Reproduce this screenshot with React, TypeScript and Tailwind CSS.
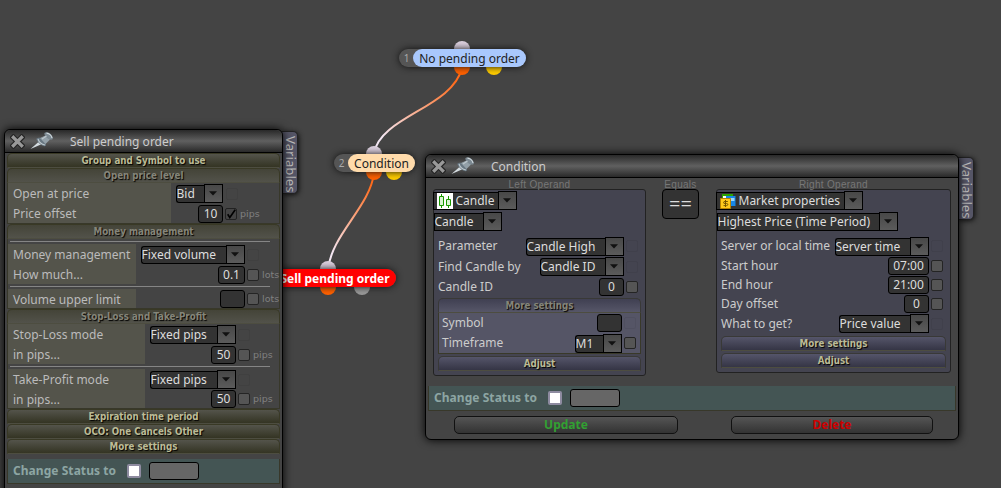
import type { ReactNode } from "react";

const TEXT = "font-['Noto_Sans',sans-serif] text-[12px] leading-[16px] whitespace-nowrap";

function Label({ children, className = "" }: { children: ReactNode; className?: string }) {
  return <span className={`${TEXT} ${className}`}>{children}</span>;
}

function Arrow() {
  return (
    <span className="flex h-[19px] w-[19px] shrink-0 items-center justify-center border border-black bg-linear-to-b from-[#484848] to-[#5b5b5b] pr-px">
      <svg width="8" height="5" viewBox="0 0 8 5"><path d="M0 0.3H8L4 4.5Z" fill="#111" /></svg>
    </span>
  );
}

function Select({ children, width, icon, square = false }: { children: ReactNode; width: string; icon?: ReactNode; square?: boolean }) {
  return (
    <span className={`flex h-[19px] shrink-0 items-end ${width}`}>
      <span className={`flex h-[18px] min-w-0 flex-1 items-center border border-r-0 border-black bg-[#333] text-[#ddd] ${square ? "" : "rounded-l-[3px]"}`}>
        {icon}
        <Label className="-ml-[0.5px]">{children}</Label>
      </span>
      <Arrow />
    </span>
  );
}

function Field({ children, width }: { children?: ReactNode; width: string }) {
  return (
    <span className={`flex h-[18px] shrink-0 items-center justify-center rounded-[3px] border border-black bg-[#333] text-[#ddd] ${width}`}>
      <Label>{children}</Label>
    </span>
  );
}

function Check({ state = "on", margin = "ml-[2px]" }: { state?: "on" | "off" | "checked"; margin?: string }) {
  const look = state === "off" ? "border-black/6" : state === "checked" ? "border-[#222] bg-[#444]" : "border-[#242424] bg-[#555]";
  return (
    <span className={`flex h-3 w-3 shrink-0 items-center justify-center rounded-[2px] border ${look} ${margin}`}>
      {state === "checked" && (
        <svg width="9" height="10" viewBox="0 0 9 10"><path d="M0.7 5.2L2.8 8.5L8.2 0.7" fill="none" stroke="#000" strokeWidth="1.6" /></svg>
      )}
    </span>
  );
}

function Unit({ children }: { children?: ReactNode }) {
  return <span className="mb-px ml-[3px] font-['DejaVu_Sans',sans-serif] text-[9.5px] leading-[16px] text-[#808080]">{children}</span>;
}

function Bar({ children, tone, active = true }: { children: ReactNode; tone: "olive" | "violet"; active?: boolean }) {
  const bg = tone === "olive"
    ? active ? "from-[#54544b] to-[#343423] border-[#393925]" : "from-[#444438] to-[#52524a] border-[#393925]"
    : active ? "from-[#55556a] to-[#353545] border-[#393937]" : "from-[#404052] to-[#565668] border-[#393937]";
  return (
    <div className={`flex h-[15px] shrink-0 items-center justify-center rounded-t-[5px] border border-b-[#4d4d40] bg-linear-to-b ${bg}`}>
      <span className={`font-['DejaVu_Sans_Condensed','DejaVu_Sans',sans-serif] text-[9.7px] font-bold [font-stretch:condensed] leading-[14px] whitespace-nowrap [text-shadow:1px_1px_1px_#000] ${active ? "text-[#bbbb96]" : "text-[#858579]"}`}>{children}</span>
    </div>
  );
}

function Row({ label, labelWidth, children, height = "h-5" }: { label: string; labelWidth: string; children: ReactNode; height?: string }) {
  return (
    <div className={`flex shrink-0 ${height}`}>
      <div className={`flex shrink-0 items-center bg-[#54544b] pt-[2px] pl-[5px] ${labelWidth}`}>
        <Label className="text-[#bbb]">{label}</Label>
      </div>
      <div className="flex min-w-0 flex-1 items-end">{children}</div>
    </div>
  );
}

function Rule() {
  return <div className="mt-[2px] mb-[2px] ml-[2px] h-px w-[260px] shrink-0 bg-[#858585]" />;
}

function TitleBar({ children }: { children: ReactNode }) {
  return (
    <div className="flex h-[23px] shrink-0 items-center rounded-t-[6px] border-b border-black bg-[linear-gradient(#292929,#606060_50%,#292929)] pl-[5px]">
      <svg width="15" height="15" viewBox="0 0 15 15">
        <path d="M3.4 3.4L11.6 11.6M11.6 3.4L3.4 11.6" stroke="#252525" strokeWidth="5.6" strokeLinecap="square" />
        <path d="M3.4 3.4L11.6 11.6M11.6 3.4L3.4 11.6" stroke="#999" strokeWidth="3.3" strokeLinecap="square" />
      </svg>
      <svg className="ml-[5px]" width="24" height="18" viewBox="0 0 24 18">
        <path d="M0.5 17L9 9.5L12 12Z" fill="#d4dce0" />
        <path d="M6.5 6.5C8 5 11 5.5 13 7.5S17 13 15.5 14C13 15 6 10 6.5 6.5Z" fill="#687782" />
        <path d="M10 6L15.5 3.5L20 7.5L15.5 12Z" fill="#93a0a8" />
        <path d="M14.5 1C16-0.5 19 0.5 21 2.5S23.5 7 22 7.5C19 8.5 13.5 3.5 14.5 1Z" fill="#7c8992" />
        <path d="M8 7C9 10 12 12.5 15 13M12 7L16.5 4" stroke="#bdc7cc" strokeWidth="1.1" fill="none" />
        <path d="M16.5 1.2C19 1.4 21.5 3.6 22 6" stroke="#cdd6da" strokeWidth="1.2" fill="none" />
      </svg>
      <Label className="ml-[16px] pt-[2px] text-[#ccc]">{children}</Label>
    </div>
  );
}

function VariablesTab({ className }: { className: string }) {
  return (
    <div className={`absolute flex h-[63px] w-4 items-center justify-center rounded-r-[5px] border border-l-0 border-[#222] bg-[#555566] pt-[4px] shadow-[1px_1px_5px_#111] ${className}`}>
      <span className="mr-[-2px] font-['Noto_Sans',sans-serif] text-[13.2px] leading-4 text-[#bbb] [writing-mode:vertical-rl]">Variables</span>
    </div>
  );
}

function ChangeStatus({ margin }: { margin: string }) {
  return (
    <div className={`flex h-[25px] shrink-0 items-center border border-t-0 border-[#38382a] bg-[#445554] pl-[5px] ${margin}`}>
      <Label className="w-[114px] font-bold tracking-[0.05px] text-[#8da5a3]">Change Status to</Label>
      <span className="h-[14px] w-[14px] rounded-[2px] border-2 border-[#8e8ba0] bg-white" />
      <span className="ml-2 h-[18px] w-[50px] rounded-[3px] border border-black bg-[#666]" />
    </div>
  );
}

function Node({ children, number, x, y, width, tone, output = "bg-[#fc0]", dots }: { children: ReactNode; number?: number; x: string; y: string; width: string; tone: string; output?: string; dots: [string, string] }) {
  return (
    <div className={`absolute h-[34px] ${x} ${y} ${width}`}>
      <span className={`absolute top-0 h-4 w-4 rounded-full bg-[#dcd0df] ${dots[0]}`} />
      <span className={`absolute bottom-0 h-4 w-4 rounded-full bg-[#ff6100] ${dots[0]}`} />
      <span className={`absolute bottom-0 h-4 w-4 rounded-full ${output} ${dots[1]}`} />
      <div className="relative mt-2 flex h-[18px] rounded-full bg-[#555] shadow-[0_0_7px_#111]">
        {number !== undefined && <span className="flex w-[14px] shrink-0 items-center justify-center pl-px font-['Noto_Sans',sans-serif] text-[10px] text-[#aaa]">{number}</span>}
        <span className={`flex min-w-0 flex-1 items-center justify-center rounded-full ${tone}`}><Label className="pt-px">{children}</Label></span>
      </div>
    </div>
  );
}

function CandleIcon() {
  return (
    <svg className="ml-[3px] mr-[3px] shrink-0" width="16" height="16" viewBox="0 0 16 16">
      <path d="M0 0H16V16H0Z" fill="#fff" />
      <path d="M4.5 1V15M11.5 3V15" stroke="#1b9900" />
      <path d="M2.5 3.5H6.5V12.5H2.5ZM9.5 6.5H13.5V12.5H9.5Z" fill="#d9f5d3" stroke="#1b9900" />
    </svg>
  );
}

function MarketIcon() {
  return (
    <svg className="ml-[3px] mr-[3px] shrink-0" width="16" height="16" viewBox="0 0 16 16">
      <path d="M2.5 1.5H12.5V9H2.5Z" fill="#fff" stroke="#32a600" />
      <path d="M2 1H13V3H2Z" fill="#2ca500" />
      <path d="M6 3H15.5V13H6Z" fill="#1787e8" />
      <path d="M7 5H14.5V8H7Z" fill="#9bd7ff" />
      <path d="M0.5 5.5H10.5V15.5H0.5Z" fill="#ffc91c" stroke="#b78100" />
      <path d="M7.8 8.5H5Q3.5 8.5 3.5 9.5T5 10.5H6.5Q7.8 10.5 7.8 11.5T6.5 12.6H3.5M5.5 7V14" fill="none" stroke="#765500" />
    </svg>
  );
}

function ParamRow({ label, height, children }: { label: string; height: string; children: ReactNode }) {
  return <div className={`flex shrink-0 items-center ${height}`}><Label className="mr-auto text-[#ccc]">{label}</Label>{children}</div>;
}

function SellWindow() {
  return (
    <div className="absolute top-[129px] left-[4px] h-[380px] w-[279px]">
      <VariablesTab className="top-[2px] left-[278px]" />
      <div className="relative flex h-full flex-col rounded-t-[6px] border border-black bg-[#444] shadow-[0_0_10px_#000]">
        <TitleBar>Sell pending order</TitleBar>
        <div className="ml-[2px] flex w-[273px] flex-col">
          <Bar tone="olive">Group and Symbol to use</Bar>
          <Bar tone="olive" active={false}>Open price level</Bar>
          <div className="flex h-[41px] flex-col border border-t-0 border-[#38382a]">
            <Row label="Open at price" labelWidth="w-[163px]"><Select width="ml-[5px] w-[47px]">Bid</Select><Check state="off" margin="mb-[3px] ml-[3px]" /></Row>
            <Row label="Price offset" labelWidth="w-[163px]"><Field width="ml-[27px] w-[25px]">10</Field><Check state="checked" margin="mb-[3px] ml-[2px]" /><Unit>pips</Unit></Row>
          </div>
          <Bar tone="olive" active={false}>Money management</Bar>
          <div className="flex h-[70px] flex-col border border-t-0 border-[#38382a]">
            <Rule />
            <Row label="Money management" labelWidth="w-[128px]"><Select width="ml-[5px] w-[104px]">Fixed volume</Select><Check state="off" margin="mb-[3px] ml-[2px]" /></Row>
            <Row label="How much..." labelWidth="w-[128px]"><Field width="ml-[82px] w-[27px]">0.1</Field><Check margin="mb-[3px] ml-[2px]" /><Unit>lots</Unit></Row>
            <Rule />
            <Row label="Volume upper limit" labelWidth="w-[128px]" height="h-[19px]"><Field width="ml-[84px] w-[25px]" /><Check margin="mb-[3px] ml-[2px]" /><Unit>lots</Unit></Row>
          </div>
          <Bar tone="olive" active={false}>Stop-Loss and Take-Profit</Bar>
          <div className="flex h-[85px] flex-col border border-t-0 border-[#38382a]">
            <Row label="Stop-Loss mode" labelWidth="w-[137px]"><Select width="ml-[5px] w-[86px]">Fixed pips</Select><Check state="off" margin="mb-[3px] ml-[2px]" /></Row>
            <Row label="in pips..." labelWidth="w-[137px]"><Field width="ml-[66px] w-[25px]">50</Field><Check margin="mb-[3px] ml-[2px]" /><Unit>pips</Unit></Row>
            <Rule />
            <Row label="Take-Profit mode" labelWidth="w-[137px]"><Select width="ml-[5px] w-[86px]">Fixed pips</Select><Check state="off" margin="mb-[3px] ml-[2px]" /></Row>
            <Row label="in pips..." labelWidth="w-[137px]" height="h-[19px]"><Field width="ml-[66px] w-[25px]">50</Field><Check margin="mb-[3px] ml-[2px]" /><Unit>pips</Unit></Row>
          </div>
          <Bar tone="olive">Expiration time period</Bar>
          <Bar tone="olive">OCO: One Cancels Other</Bar>
          <Bar tone="olive">More settings</Bar>
          <ChangeStatus margin="mt-[5px]" />
        </div>
      </div>
    </div>
  );
}

const CAPTION = "font-['Liberation_Sans',sans-serif] text-[10px] leading-[9px] tracking-[0.3px] text-[#777] text-center whitespace-nowrap";

function ConditionWindow() {
  return (
    <div className="absolute top-[154px] left-[425px] h-[286px] w-[534px]">
      <VariablesTab className="top-[3px] left-[533px]" />
      <div className="relative flex h-full flex-col rounded-[6px] border border-black bg-[#444] shadow-[0_0_10px_#000]">
        <TitleBar>Condition</TitleBar>
        <div className="flex h-[208px] shrink-0 items-start pt-[2px] pl-[7px]">
          <div className="w-[213px]">
            <div className={CAPTION}>Left Operand</div>
            <div className="flex h-[187px] flex-col rounded-[3px] border border-[#222] bg-[#444450] pt-px">
              <Select square width="-ml-px w-[84px]" icon={<CandleIcon />}>Candle</Select>
              <Select square width="mt-[2px] w-[68px]">Candle</Select>
              <div className="mt-[5px] flex flex-col pr-[7px] pl-[4px]">
                <ParamRow label="Parameter" height="h-[20px]"><Select width="w-[98px]">Candle High</Select><Check state="off" /></ParamRow>
                <ParamRow label="Find Candle by" height="h-[21px]"><Select width="w-[84px]">Candle ID</Select><Check state="off" /></ParamRow>
                <ParamRow label="Candle ID" height="h-[20px]"><Field width="w-[25px]">0</Field><Check /></ParamRow>
              </div>
              <div className="mx-1 mt-px flex flex-col">
                <Bar tone="violet" active={false}>More settings</Bar>
                <div className="flex h-[41px] flex-col border border-t-0 border-[#393929] bg-[#555566] pr-[4px] pl-[3px]">
                  <ParamRow label="Symbol" height="h-[20px]"><Field width="w-[25px]" /><Check state="off" /></ParamRow>
                  <ParamRow label="Timeframe" height="h-[20px]"><Select width="w-[47px]">M1</Select><Check /></ParamRow>
                </div>
                <div className="h-[2px]" />
                <Bar tone="violet">Adjust</Bar>
              </div>
            </div>
          </div>
          <div className="ml-[16px] w-[37px]">
            <div className={CAPTION}>Equals</div>
            <div className="flex h-[30px] items-center justify-center rounded-[4px] border border-black bg-[#333] pb-px font-['Noto_Sans',sans-serif] text-[20px] leading-5 text-[#ddd]">==</div>
          </div>
          <div className="ml-[17px] w-[235px]">
            <div className={CAPTION}>Right Operand</div>
            <div className="flex h-[184px] flex-col rounded-[3px] border border-[#222] bg-[#444450] pt-px">
              <Select square width="-ml-px w-[147px]" icon={<MarketIcon />}>Market properties</Select>
              <Select square width="mt-[2px] w-[181px]">Highest Price (Time Period)</Select>
              <div className="mt-[5px] flex flex-col pr-[7px] pl-[4px]">
                <ParamRow label="Server or local time" height="h-[20px]"><Select width="w-[94px]">Server time</Select><Check state="off" /></ParamRow>
                <ParamRow label="Start hour" height="h-[19px]"><Field width="w-[41px]">07:00</Field><Check /></ParamRow>
                <ParamRow label="End hour" height="h-[19px]"><Field width="w-[41px]">21:00</Field><Check /></ParamRow>
                <ParamRow label="Day offset" height="h-[19px]"><Field width="w-[25px]">0</Field><Check /></ParamRow>
                <ParamRow label="What to get?" height="h-[21px]"><Select width="w-[90px]">Price value</Select><Check state="off" /></ParamRow>
              </div>
              <div className="mx-1 mt-[2px] flex flex-col gap-[2px]">
                <Bar tone="violet">More settings</Bar>
                <Bar tone="violet">Adjust</Bar>
              </div>
            </div>
          </div>
        </div>
        <ChangeStatus margin="mx-[2px]" />
        <div className="mt-[5px] flex">
          <button className="ml-[28px] flex h-[18px] w-[224px] items-center justify-center rounded-[5px] border border-[#111] bg-linear-to-b from-[#555] to-[#333] text-[#32a032]"><Label className="font-bold">Update</Label></button>
          <button className="ml-[53px] flex h-[18px] w-[202px] items-center justify-center rounded-[5px] border border-[#111] bg-linear-to-b from-[#555] to-[#333] text-[#cc0000]"><Label className="font-bold">Delete</Label></button>
        </div>
      </div>
    </div>
  );
}

export default function App() {
  return (
    <main className="relative h-[488px] w-[1001px] overflow-hidden bg-[#444]">
      <svg className="absolute inset-0" width="1001" height="488" viewBox="0 0 1001 488" fill="none" strokeWidth="2">
        <defs>
          <linearGradient id="upper" gradientUnits="userSpaceOnUse" x1="374" y1="149" x2="462" y2="72"><stop offset=".12" stopColor="#f4e7f3" /><stop offset=".9" stopColor="#ff6b1c" /></linearGradient>
          <linearGradient id="lower" gradientUnits="userSpaceOnUse" x1="328" y1="264" x2="374" y2="176"><stop offset=".12" stopColor="#f4e7f3" /><stop offset=".9" stopColor="#ff6b1c" /></linearGradient>
        </defs>
        <path d="M462 68C452 108 381 116 374 153" stroke="url(#upper)" />
        <path d="M374 173C370 207 331 235 328 270" stroke="url(#lower)" />
      </svg>
      <Node number={1} x="left-[399px]" y="top-[41px]" width="w-[127px]" tone="bg-[#a9c8fd] text-[#222]" dots={["left-[55px]", "left-[87px]"]}>No pending order</Node>
      <Node number={2} x="left-[334px]" y="top-[146px]" width="w-[81px]" tone="bg-[#ffdbab] text-[#222]" dots={["left-[32px]", "left-[52px]"]}>Condition</Node>
      <Node x="left-[274px]" y="top-[261px]" width="w-[122px]" tone="bg-[#f00] text-white font-bold" output="bg-[#999]" dots={["left-[46px]", "left-[80px]"]}>Sell pending order</Node>
      <SellWindow />
      <ConditionWindow />
    </main>
  );
}
